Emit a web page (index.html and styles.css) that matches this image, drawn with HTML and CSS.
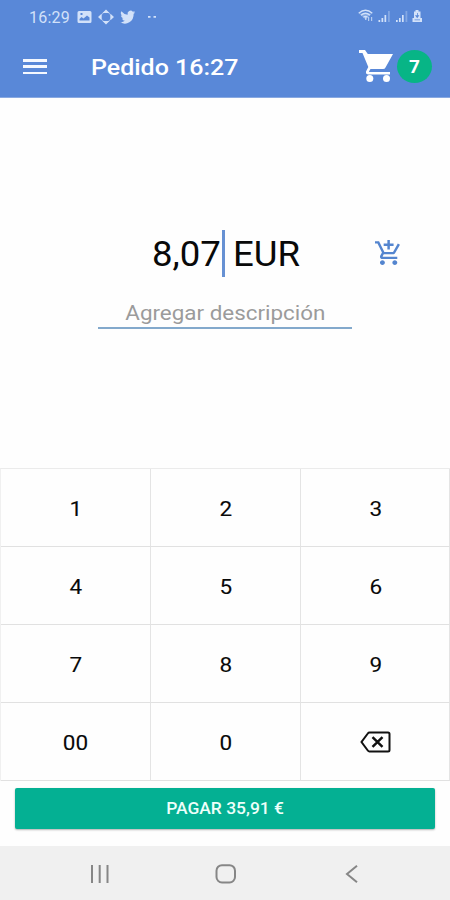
FILE: index.html
```
<!DOCTYPE html>
<html lang="es">
<head>
<meta charset="utf-8">
<title>Pedido</title>
<link rel="stylesheet" href="styles.css">
</head>
<body>
<div class="screen">
  <header class="top">
    <div class="status">
      <span class="time">16:29</span>
      <svg class="notifications" width="82" height="20" viewBox="0 0 82 20">
        <path fill-rule="evenodd" d="M2 3h11q1.500 0 1.500 1.500v9q0 1.500-1.500 1.500H2Q.5 15 .5 13.500v-9Q.5 3 2 3zM2.500 12.500h10V9.500L10 7.500 6.500 10.500 4.500 9 2.500 11zM3.500 5v2h2V5z"/>
        <path d="M29 1.500l3.500 3.500h-7zM29 16.500l-3.500-3.500h7zM21 9l3.500-3.200v6.400zM37 9l-3.500-3.200v6.400z"/>
        <circle cx="29" cy="9" r="5" fill="none" stroke="currentColor" stroke-width="1" opacity=".65"/>
        <path transform="translate(43.500 .9) scale(.62 .66)" d="M23.600 4.900a10 10 0 0 1-2.800.8 5 5 0 0 0 2.200-2.700 10 10 0 0 1-3.100 1.200 4.900 4.900 0 0 0-8.400 4.500A14 14 0 0 1 1.400 3.600a4.900 4.900 0 0 0 1.500 6.600 5 5 0 0 1-2.200-.6 4.900 4.900 0 0 0 3.900 4.900 5 5 0 0 1-2.200.1 4.900 4.900 0 0 0 4.600 3.400A9.900 9.900 0 0 1-.300 20a14 14 0 0 0 21.500-12.600 10 10 0 0 0 2.400-2.500z"/>
        <path d="M71 8h2.500v1.700H71zM76.500 8H79v1.700h-2.500z"/>
      </svg>
      <svg class="signals" width="66" height="18" viewBox="0 0 66 18">
        <g fill="none" stroke="currentColor" stroke-width="1.300">
          <path d="M.7 5.200Q7.500-.8 14.300 5.200M3 7.300Q7.500 3.300 12 7.300M5.500 9.200Q7.500 7.500 9.500 9.200"/>
        </g>
        <path d="M1 5.500h13l-6.500 6z" opacity=".35"/>
        <path d="M7 9h1.500v3H7zM10 9h1.200v4H10zM13 9h1.200v4H13z" opacity=".75"/>
        <path d="M20.500 12h1.700v2h-1.700zM23.500 10h1.700v4h-1.700zM26.500 7h1.700v7h-1.700zM38 12h1.700v2H38zM41 10h1.700v4H41zM44 7h1.700v7H44z"/>
        <path d="M30 3h1.800v11H30zM47.500 3h1.800v11h-1.800z" opacity=".35"/>
        <path fill-rule="evenodd" d="M57.500 2h3v1.500h2V10h1.500v4h-9.500v-4H56V3.500h1.500zM59 5v2.300h-2l2.200 3 2.200-3h-1.600V5zM56.500 11.500v.8h5.500v-.8z"/>
      </svg>
    </div>
    <div class="bar">
      <div class="menu"><i></i><i></i><i></i></div>
      <h1><span>Pedido 16:27</span></h1>
      <svg class="cart" width="34" height="32" viewBox="0 0 34 32"><path d="M0 0h6l2.800 4H34L26.500 17.500Q25.800 19 24 19H11.500L10 21.500Q10 22 10.700 22H31v2.500H9.500Q6.500 24.500 7 21.500L9.300 17 3.500 3H0z"/><circle cx="10.800" cy="28.500" r="3.500"/><circle cx="27.500" cy="28.500" r="3.500"/></svg>
      <div class="badge">7</div>
    </div>
  </header>
  <main class="entry">
    <div class="amount-row">
      <div class="amount"><span class="value">8,07</span><i class="caret"></i><span class="currency">EUR</span></div>
      <svg class="add-cart" width="26" height="25" viewBox="1 1 21 21" preserveAspectRatio="none"><path d="M11 9h2V6h3V4h-3V1h-2v3H8v2h3v3zm-4 9c-1.100 0-1.990.9-1.990 2S5.900 22 7 22s2-.9 2-2-.9-2-2-2zm10 0c-1.100 0-1.990.9-1.990 2s.89 2 1.990 2 2-.9 2-2-.9-2-2-2zm-9.830-3.250l.03-.12.9-1.630h7.450c.75 0 1.410-.41 1.750-1.030l3.860-7.010L19.420 4h-.01l-1.100 2-2.760 5H8.530l-.13-.27L6.160 6l-.95-2-.94-2H1v2h2l3.600 7.590-1.350 2.450c-.16.280-.25.610-.25.960 0 1.100.9 2 2 2h12v-2H7.420c-.13 0-.25-.11-.25-.25z"/></svg>
    </div>
    <div class="description"><span>Agregar descripción</span></div>
  </main>
  <section class="keypad">
    <div><span>1</span></div><div><span>2</span></div><div><span>3</span></div>
    <div><span>4</span></div><div><span>5</span></div><div><span>6</span></div>
    <div><span>7</span></div><div><span>8</span></div><div><span>9</span></div>
    <div><span>00</span></div><div><span>0</span></div>
    <div><svg width="31" height="22" viewBox="0 0 31 22" fill="none" stroke="#111" stroke-width="2"><path d="M9.500 1.500H28q1.500 0 1.500 1.500v16q0 1.500-1.500 1.500H9.500Q8.500 20.500 7.800 19.500L1.500 11 7.800 2.500Q8.500 1.500 9.500 1.500z"/><path stroke-width="2.500" d="M12.500 6.200l10 9.600M22.500 6.200l-10 9.600"/></svg></div>
  </section>
  <div class="checkout"><button><span>PAGAR 35,91 €</span></button></div>
  <nav class="nav">
    <svg width="20" height="20" viewBox="0 0 20 20"><path d="M2 1v18M9.700 1v18M17.500 1v18"/></svg>
    <svg width="22" height="20" viewBox="0 0 22 20"><rect x="1.500" y="1.200" width="18.500" height="17.300" rx="5.500"/></svg>
    <svg width="14" height="20" viewBox="0 0 14 20"><path d="M12 1.800L2 10l10 8.200"/></svg>
  </nav>
</div>
</body>
</html>
```
FILE: styles.css
```
* { box-sizing: border-box; }
body { margin: 0; font-family: Roboto, sans-serif; background: #fefefe; }
.screen { width: 450px; height: 900px; display: flex; flex-direction: column; overflow: hidden; }
.top { height: 98px; background: #5988d8; color: #fff; border-bottom: 1px solid #89a9e1; }
.status { height: 36px; display: flex; align-items: flex-start; padding: 8px 26px 0 29px; color: #d2e1f9; }
.status svg { fill: currentColor; }
.time { width: 48px; font-size: 16px; line-height: 19px; letter-spacing: .2px; }
.signals { margin-left: auto; }
.bar { height: 61px; display: flex; align-items: center; padding: 0 18px 0 23px; }
.menu { width: 24px; height: 15px; display: flex; flex-direction: column; justify-content: space-between; }
.menu i { height: 2.500px; background: #f4f8ff; }
h1 { margin: 0 auto 0 43.500px; font-size: 22.500px; font-weight: 500; line-height: 28px; }
h1 span { display: inline-block; transform: scaleX(1.11); transform-origin: left; }
.cart { fill: #fff; margin: 0 4px 2px 0; }
.badge { width: 35px; height: 33px; border-radius: 50%; background: #07b586; display: flex; align-items: center; justify-content: center; font-size: 19px; font-weight: 700; }
.entry { height: 370px; padding-top: 131px; }
.amount-row { height: 48px; display: flex; align-items: center; padding: 0 49px 0 152px; }
.amount { display: flex; align-items: center; font-size: 34.500px; color: #090909; }
.amount span { display: inline-block; transform-origin: left; transform: scaleX(1.06); padding-top: 2px; }
.value { width: 70px; }
.caret { width: 3px; height: 47px; background: #6791d3; }
.currency { margin-left: 7.500px; }
.add-cart { margin-left: auto; margin-bottom: 1px; fill: #5485cf; }
.description { width: 254px; height: 52px; margin-left: 98px; border-bottom: 2px solid #83a9cc; display: flex; align-items: flex-end; justify-content: center; padding-bottom: 2px; font-size: 20px; line-height: 24px; color: #9b9b9b; }
.description span { transform: scaleX(1.12); white-space: nowrap; }
.keypad { height: 313px; display: grid; grid-template-columns: 150px 150px 149px; grid-template-rows: repeat(4, 78px); border-top: 1px solid #ebebeb; border-left: 1px solid #f0f0f0; width: 450px; }
.keypad div { border-right: 1px solid #e4e4e4; border-bottom: 1px solid #e1e1e1; display: flex; align-items: center; justify-content: center; font-size: 20.500px; color: #090909; padding-top: 2px; }
.keypad div:nth-child(3n) { padding-left: 1px; }
.keypad svg { margin-bottom: 2px; }
.keypad span { transform: scaleX(1.1); -webkit-text-stroke: .1px #090909; }
.checkout { height: 65px; padding: 7px 15px 0; }
.checkout button { display: block; width: 420px; height: 41px; padding: 0; border: 0; border-radius: 2px; background: #04b093; color: #edfffa; font: 500 16px Roboto, sans-serif; box-shadow: 0 1px 2px rgba(0, 0, 0, .3); }
.checkout span { display: inline-block; transform: scaleX(1.09); }
.nav { flex: 1; background: #f0f0f0; display: flex; align-items: center; justify-content: space-between; padding: 2px 91px 0 90px; }
.nav svg { fill: none; stroke: #868686; stroke-width: 2; }
.nav svg:nth-child(2) { margin-right: 3px; }
```
